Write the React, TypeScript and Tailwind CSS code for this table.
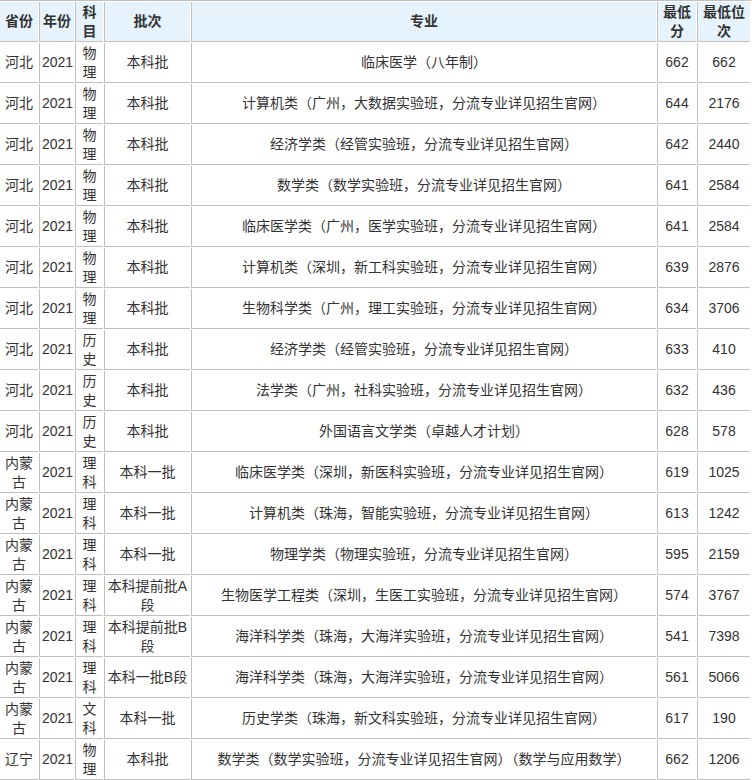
const rows: [string, string, string, string, string, string, string][] = [
  ['河北', '2021', '物理', '本科批', '临床医学（八年制）', '662', '662'],
  ['河北', '2021', '物理', '本科批', '计算机类（广州，大数据实验班，分流专业详见招生官网）', '644', '2176'],
  ['河北', '2021', '物理', '本科批', '经济学类（经管实验班，分流专业详见招生官网）', '642', '2440'],
  ['河北', '2021', '物理', '本科批', '数学类（数学实验班，分流专业详见招生官网）', '641', '2584'],
  ['河北', '2021', '物理', '本科批', '临床医学类（广州，医学实验班，分流专业详见招生官网）', '641', '2584'],
  ['河北', '2021', '物理', '本科批', '计算机类（深圳，新工科实验班，分流专业详见招生官网）', '639', '2876'],
  ['河北', '2021', '物理', '本科批', '生物科学类（广州，理工实验班，分流专业详见招生官网）', '634', '3706'],
  ['河北', '2021', '历史', '本科批', '经济学类（经管实验班，分流专业详见招生官网）', '633', '410'],
  ['河北', '2021', '历史', '本科批', '法学类（广州，社科实验班，分流专业详见招生官网）', '632', '436'],
  ['河北', '2021', '历史', '本科批', '外国语言文学类（卓越人才计划）', '628', '578'],
  ['内蒙古', '2021', '理科', '本科一批', '临床医学类（深圳，新医科实验班，分流专业详见招生官网）', '619', '1025'],
  ['内蒙古', '2021', '理科', '本科一批', '计算机类（珠海，智能实验班，分流专业详见招生官网）', '613', '1242'],
  ['内蒙古', '2021', '理科', '本科一批', '物理学类（物理实验班，分流专业详见招生官网）', '595', '2159'],
  ['内蒙古', '2021', '理科', '本科提前批A段', '生物医学工程类（深圳，生医工实验班，分流专业详见招生官网）', '574', '3767'],
  ['内蒙古', '2021', '理科', '本科提前批B段', '海洋科学类（珠海，大海洋实验班，分流专业详见招生官网）', '541', '7398'],
  ['内蒙古', '2021', '理科', '本科一批B段', '海洋科学类（珠海，大海洋实验班，分流专业详见招生官网）', '561', '5066'],
  ['内蒙古', '2021', '文科', '本科一批', '历史学类（珠海，新文科实验班，分流专业详见招生官网）', '617', '190'],
  ['辽宁', '2021', '物理', '本科批', '数学类（数学实验班，分流专业详见招生官网）（数学与应用数学）', '662', '1206'],
];

const headers = ['省份', '年份', '科目', '批次', '专业', '最低分', '最低位次'];
const widths = ['w-[38px]', 'w-[35px]', 'w-[28px]', 'w-[86px]', 'w-[465px]', 'w-[39px]', 'w-[53px]'];

export default function App() {
  return (
    <div className="w-[752px] h-[780px] overflow-hidden bg-white text-[#333] text-[14px] leading-[19px] [font-family:'Liberation_Sans','Noto_Sans_CJK_SC',sans-serif]">
      <table className="w-[752px] table-fixed border-separate border-spacing-[1px] border-t border-[#c0c0c0] -ml-px">
        <thead>
          <tr>
            {headers.map((h, i) => (
              <th
                key={h}
                className={`${widths[i]} h-[40px] p-0 bg-[#e6f3fc] font-bold text-center px-[2px] border-b border-[#c0c0c0] ${i > 0 ? 'border-l' : ''}`}
              >
                {h}
              </th>
            ))}
          </tr>
        </thead>
        <tbody>
          {rows.map((r, ri) => (
            <tr key={ri}>
              {r.map((c, ci) => (
                <td
                  key={ci}
                  className={`h-[40px] py-0 text-center px-[2px] border-b border-[#c0c0c0] ${ci > 0 ? 'border-l' : ''}`}
                >
                  {c}
                </td>
              ))}
            </tr>
          ))}
        </tbody>
      </table>
    </div>
  );
}
